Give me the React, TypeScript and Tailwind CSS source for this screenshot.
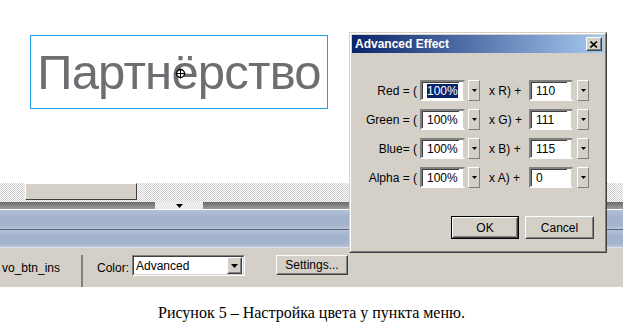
import React from 'react';

const ui = { fontFamily: '"Liberation Sans", Arial, sans-serif' };

const TinyArrow = ({ w = 5, h = 3 }: { w?: number; h?: number }) => (
  <svg width={w} height={h} viewBox={`0 0 ${w} ${h}`}>
    <path d={`M0 0H${w}L${w / 2} ${h}Z`} fill="#000" />
  </svg>
);

// sunken white edit field, classic win32 look
const Field = ({ value, selected, w }: { value: string; selected?: boolean; w: string }) => (
  <div className={`${w} h-[21px] border-t-2 border-l-2 border-t-[#808080] border-l-[#808080] border-b-2 border-r-2 border-b-white border-r-[#d4d0c8] bg-white flex items-center pl-[4px]`}>
    <div className="h-full w-full border-t border-l border-[#404040] border-r-0 border-b-0 flex items-center pl-[1px] -ml-[4px]">
      <span className={`ml-[3px] text-[12px] leading-[14px] ${selected ? 'bg-[#0a246a] text-white' : 'text-black'}`}>{value}</span>
    </div>
  </div>
);

const DropBtn = () => (
  <div className="w-[12px] h-[21px] border border-t-white border-l-white border-r-[#808080] border-b-[#808080] bg-[#d4d0c8] flex items-center justify-center">
    <TinyArrow />
  </div>
);

const rows = [
  { label: 'Red = (', mul: '100%', op: 'x R) +', add: '110', sel: true },
  { label: 'Green = (', mul: '100%', op: 'x G) +', add: '111' },
  { label: 'Blue= (', mul: '100%', op: 'x B) +', add: '115' },
  { label: 'Alpha = (', mul: '100%', op: 'x A) +', add: '0' },
];

const Raised = ({ className, children }: { className: string; children: React.ReactNode }) => (
  <div className={`border border-t-white border-l-white border-r-[#404040] border-b-[#404040] bg-[#d4d0c8] ${className}`}>
    <div className="w-full h-full border border-t-transparent border-l-transparent border-r-[#808080] border-b-[#808080] flex items-center justify-center">
      {children}
    </div>
  </div>
);

const AdvancedEffect = () => (
  <div className="absolute left-[349px] top-[32px] w-[258px] h-[221px] border border-t-[#d4d0c8] border-l-[#d4d0c8] border-r-[#404040] border-b-[#404040] bg-[#d4d0c8]" style={ui}>
    <div className="w-full h-full border border-t-white border-l-white border-r-[#808080] border-b-[#808080] p-[1px] flex flex-col">
      <div className="h-[18px] bg-[linear-gradient(to_right,#0a246a,#a6caf0)] flex items-center justify-between pl-[3px] pr-[2px]">
        <span className="text-white font-bold text-[12px] leading-[14px]">Advanced Effect</span>
        <Raised className="w-[16px] h-[14px]">
          <svg width="8" height="7" viewBox="0 0 8 7">
            <path d="M0.5 0.5L7 6.5M7 0.5L0.5 6.5" stroke="#000" strokeWidth="1.6" />
          </svg>
        </Raised>
      </div>
      <div className="flex flex-col gap-[8px] pt-[27px]">
        {rows.map(r => (
          <div key={r.label} className="flex items-center h-[21px] text-[12px] text-black">
            <span className="w-[65px] text-right">{r.label}</span>
            <div className="ml-[3px]"><Field value={r.mul} selected={r.sel} w="w-[45px]" /></div>
            <div className="ml-[3px]"><DropBtn /></div>
            <span className="w-[40px] ml-[9px]">{r.op}</span>
            <Field value={r.add} w="w-[44px]" />
            <div className="ml-[4px]"><DropBtn /></div>
          </div>
        ))}
      </div>
      <div className="flex justify-end gap-[6px] mt-[28px] pr-[10px]">
        <div className="border border-black">
          <Raised className="w-[66px] h-[21px]"><span className="text-[12px]">OK</span></Raised>
        </div>
        <Raised className="w-[69px] h-[23px]"><span className="text-[12px]">Cancel</span></Raised>
      </div>
    </div>
  </div>
);

export default function App() {
  return (
    <div className="relative w-[633px] h-[329px] bg-white overflow-hidden" style={ui}>
      <div className="w-[623px]">
        {/* stage */}
        <div className="h-[183px] pt-[35px] pl-[30px]">
          <div className="relative w-[298px] h-[74px] border border-[#1ea0e8] flex items-center justify-center">
            <span className="text-[49px] leading-none tracking-[-0.8px] text-[#6d6d72]">Партнёрство</span>
            <svg className="absolute left-[144px] top-[32px]" width="11" height="11" viewBox="0 0 11 11">
              <circle cx="5.5" cy="5.5" r="4" fill="#fff" stroke="#000" strokeWidth="1.3" />
              <path d="M5.5 0.5V10.5M0.5 5.5H10.5" stroke="#000" strokeWidth="1" />
            </svg>
          </div>
        </div>
        {/* timeline strip */}
        <div className="h-[19px] bg-[image:repeating-conic-gradient(#cfcfcf_0%_25%,#ffffff_0%_50%)] bg-[length:2px_2px] pl-[25px]">
          <div className="w-[112px] h-[17px] bg-[#d4d0c8] border border-t-white border-l-white border-r-[#404040] border-b-[#404040]" />
        </div>
        <div className="h-[7px] bg-[linear-gradient(#6a6a6a,#9c9c9c)] pl-[155px]">
          <div className="w-[48px] h-[7px] bg-[#ececec] flex items-center justify-center">
            <TinyArrow w={7} h={4} />
          </div>
        </div>
        <div className="h-[20px] border-t border-white bg-[linear-gradient(#b4c2d8,#a2b2cb_40%,#a5b5cd_80%,#bac6da)]" />
        <div className="h-[1px] bg-[#5b6273]" />
        <div className="h-[18px] border-b border-[#dfe5ee] bg-[linear-gradient(#b4c2d8,#a2b2cb_40%,#a5b5cd_80%,#bac6da)]" />
        {/* properties bar */}
        <div className="h-[39px] bg-[#d4d0c8] flex text-[12px] text-black">
          <div className="w-[81px] pl-[2px] pt-[11px]">vo_btn_ins</div>
          <div className="w-[2px] mt-[7px] bg-[#808080]" />
          <div className="flex items-start pt-[7px]">
            <span className="ml-[14px] mt-[4px]">Color:</span>
            <div className="ml-[3px] w-[113px] h-[21px] border border-t-[#808080] border-l-[#808080] border-r-white border-b-white">
              <div className="w-full h-full bg-white border border-t-[#404040] border-l-[#404040] border-r-[#d4d0c8] border-b-[#d4d0c8] flex items-center justify-between pl-[2px] pr-[1px]">
                <span>Advanced</span>
                <Raised className="w-[15px] h-[17px]"><TinyArrow w={7} h={4} /></Raised>
              </div>
            </div>
            <Raised className="ml-[31px] w-[72px] h-[20px]"><span>Settings...</span></Raised>
          </div>
        </div>
      </div>
      <div className="w-[623px] pt-[14px] text-center text-[16px] text-black" style={{ fontFamily: '"Liberation Serif", "Times New Roman", serif' }}>
        Рисунок 5 – Настройка цвета у пункта меню.
      </div>
      <AdvancedEffect />
    </div>
  );
}
